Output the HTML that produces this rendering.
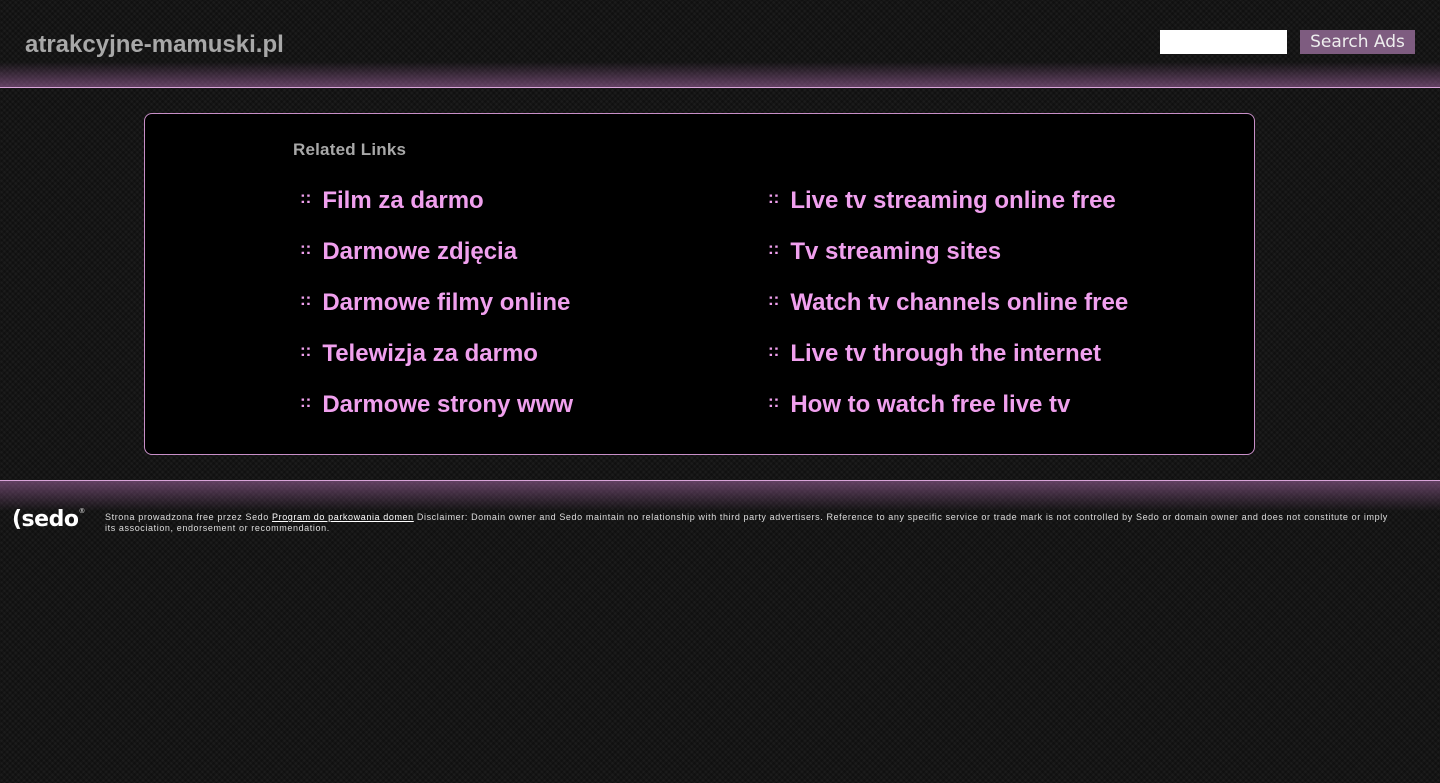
<!DOCTYPE html>
<html><head><meta charset="utf-8"><style>
html,body{margin:0;padding:0;width:1440px;height:783px;overflow:hidden;background:#1c1c1c;
background-image:repeating-linear-gradient(45deg,rgba(0,0,0,.25) 0 2px,transparent 2px 4px),repeating-linear-gradient(-45deg,rgba(0,0,0,.25) 0 2px,transparent 2px 4px);
font-family:"Liberation Sans",sans-serif;position:relative}
.hdr{position:absolute;left:0;top:0;width:1440px;height:87px;background:linear-gradient(to bottom,transparent 0,transparent 62px,rgba(160,100,160,.55) 86px);border-bottom:1px solid #d9a4d9}
.dom{position:absolute;left:25px;top:31px;font-size:24px;font-weight:bold;color:#a8a8a8}
.inp{position:absolute;left:1160px;top:30px;width:127px;height:24px;background:#fff}
.btn{position:absolute;left:1300px;top:30px;width:115px;height:24px;background:#7e5c80;color:#eee;font-family:"DejaVu Sans",sans-serif;font-size:17px;text-align:center;line-height:25px}
.box{position:absolute;left:144px;top:113px;width:1109px;height:340px;background:#000;border:1px solid #c88fc8;border-radius:8px}
.rl{position:absolute;left:148px;top:26px;font-size:17px;font-weight:bold;color:#a8a8a8;letter-spacing:.2px}
.l{position:absolute;font-size:24px;font-weight:bold;color:#f0a0ee;white-space:nowrap}
.l span{font-size:17px;position:relative;top:-5px;margin-right:11px;margin-left:10px}
.ftr{position:absolute;left:0;top:480px;width:1440px;height:30px;border-top:1px solid #d9a4d9;background:linear-gradient(to bottom,rgba(160,100,160,.55),transparent)}
.sedo{position:absolute;left:12px;top:507px;color:#fff;font-weight:bold;font-size:22px;font-family:"DejaVu Sans",sans-serif;letter-spacing:-.5px}
.ft{position:absolute;left:105px;top:512px;width:1294px;font-size:9px;color:#ddd;line-height:11px;letter-spacing:.6px}
.ft u{color:#fff}
</style></head><body>
<div class="hdr"></div>
<div class="dom">atrakcyjne-mamuski.pl</div>
<div class="inp"></div><div class="btn">Search Ads</div>
<div class="box">
<div class="rl">Related Links</div>
<div class="l" style="left:145px;top:73px"><span>::</span>Film za darmo</div>
<div class="l" style="left:145px;top:124px"><span>::</span>Darmowe zdjęcia</div>
<div class="l" style="left:145px;top:175px"><span>::</span>Darmowe filmy online</div>
<div class="l" style="left:145px;top:226px"><span>::</span>Telewizja za darmo</div>
<div class="l" style="left:145px;top:277px"><span>::</span>Darmowe strony www</div>
<div class="l" style="left:613px;top:73px"><span>::</span>Live tv streaming online free</div>
<div class="l" style="left:613px;top:124px"><span>::</span>Tv streaming sites</div>
<div class="l" style="left:613px;top:175px"><span>::</span>Watch tv channels online free</div>
<div class="l" style="left:613px;top:226px"><span>::</span>Live tv through the internet</div>
<div class="l" style="left:613px;top:277px"><span>::</span>How to watch free live tv</div>
</div>
<div class="ftr"></div>
<div class="sedo">(sedo<span style="font-size:7px;vertical-align:top;color:#aaa">®</span></div>
<div class="ft">Strona prowadzona free przez Sedo <u>Program do parkowania domen</u> Disclaimer: Domain owner and Sedo maintain no relationship with third party advertisers. Reference to any specific service or trade mark is not controlled by Sedo or domain owner and does not constitute or imply its association, endorsement or recommendation.</div>
</body></html>
